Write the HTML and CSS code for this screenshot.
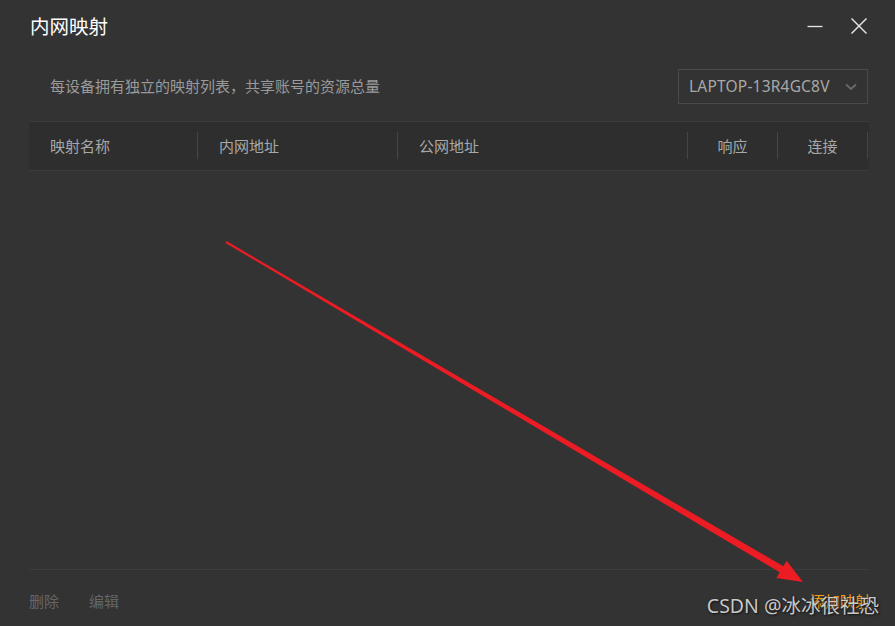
FILE: index.html
```html
<!DOCTYPE html>
<html lang="zh-CN">
<head>
<meta charset="utf-8">
<title>内网映射</title>
<link rel="stylesheet" href="styles.css">
</head>
<body>
<div class="dialog">
  <div class="titlebar">
    <div class="title">内网映射</div>
    <div class="win-controls">
      <span class="ctl ctl-min"><svg width="16" height="16" viewBox="0 0 16 16"><line x1="0.5" y1="8.5" x2="15.5" y2="8.5" stroke="#e6e6e6" stroke-width="1.3"/></svg></span>
      <span class="ctl ctl-close"><svg width="16" height="16" viewBox="0 0 16 16"><line x1="0.5" y1="0.5" x2="15.5" y2="15.5" stroke="#e6e6e6" stroke-width="1.4"/><line x1="15.5" y1="0.5" x2="0.5" y2="15.5" stroke="#e6e6e6" stroke-width="1.4"/></svg></span>
    </div>
  </div>
  <div class="content">
    <div class="toolbar">
      <div class="desc">每设备拥有独立的映射列表，共享账号的资源总量</div>
      <div class="select">
        <span class="select-text">LAPTOP-13R4GC8V</span>
        <svg class="chev" width="12" height="8" viewBox="0 0 12 8"><polyline points="1,1.5 6,6 11,1.5" fill="none" stroke="#6a6a6a" stroke-width="1.8"/></svg>
      </div>
    </div>
    <div class="thead">
      <div class="th">映射名称</div>
      <div class="th">内网地址</div>
      <div class="th">公网地址</div>
      <div class="th center">响应</div>
      <div class="th center">连接</div>
    </div>
    <div class="tbody"></div>
    <div class="footer">
      <div class="actions">
        <span class="act">删除</span>
        <span class="act">编辑</span>
      </div>
      <span class="add">添加映射</span>
    </div>
  </div>
</div>
<svg class="arrow" width="895" height="626" viewBox="0 0 895 626">
  <polygon fill="#ec1c24" points="226.5,241.1 783.3,566.3 786.6,560.7 803,582 776.4,577.9 779.7,572.3 225.5,242.9"/>
</svg>
<div class="watermark">CSDN @冰冰很社恐</div>
</body>
</html>
```

FILE: styles.css
```css
* { box-sizing: border-box; }
html, body {
  margin: 0;
  padding: 0;
}
body {
  width: 895px;
  height: 626px;
  background: #333333;
  font-family: "Noto Sans CJK SC", "Noto Sans", sans-serif;
  overflow: hidden;
  position: relative;
}
.dialog {
  height: 626px;
  display: flex;
  flex-direction: column;
}
.titlebar {
  height: 52px;
  display: flex;
  align-items: center;
  justify-content: space-between;
  padding: 0 28px 0 30px;
  flex: none;
}
.title {
  color: #ffffff;
  font-size: 19.5px;
  line-height: 24px;
  margin-top: -1px;
}
.win-controls {
  display: flex;
  align-items: center;
  gap: 28px;
}
.ctl {
  display: block;
  width: 16px;
  height: 16px;
}
.ctl svg { display: block; }
.ctl-min { margin-top: -1px; }
.content {
  flex: 1;
  display: flex;
  flex-direction: column;
  padding: 0 26px 0 29px;
}
.toolbar {
  margin-top: 17px;
  height: 34px;
  display: flex;
  align-items: center;
  justify-content: space-between;
  flex: none;
}
.desc {
  padding-left: 21px;
  color: #9a9a9a;
  font-size: 15px;
  line-height: 20px;
}
.select {
  width: 190px;
  height: 35px;
  margin-right: 1px;
  border: 1px solid #4a4a4a;
  display: flex;
  align-items: center;
  justify-content: space-between;
  padding: 0 10px 0 10px;
}
.select-text {
  color: #a8a8a8;
  font-family: "Noto Sans", "Open Sans", sans-serif;
  font-size: 15.5px;
  letter-spacing: 0.2px;
}
.chev { display: block; margin-top: 1px; }
.thead {
  margin-top: 18px;
  display: grid;
  grid-template-columns: 169px 200px 290px 90px 91px;
  background: #2e2e2e;
  border-top: 1px solid #3b3b3b;
  border-bottom: 1px solid #3b3b3b;
  padding: 10px 0 11px;
  flex: none;
}
.th {
  height: 27px;
  display: flex;
  align-items: center;
  padding-left: 21px;
  border-right: 1px solid #454545;
  color: #a8a8a8;
  font-size: 15px;
}
.th:last-child { margin-right: 1px; }
.th.center {
  justify-content: center;
  padding-left: 0;
}
.tbody {
  flex: 1;
}
.footer {
  flex: none;
  height: 57px;
  border-top: 1px solid #3d3d3d;
  display: flex;
  align-items: flex-start;
  justify-content: space-between;
  padding-top: 21px;
}
.actions {
  display: flex;
  gap: 30px;
}
.act {
  color: #666666;
  font-size: 15px;
  line-height: 20px;
}
.add {
  color: #f5a016;
  font-size: 15px;
  line-height: 20px;
  margin-right: -1px;
}
.arrow {
  position: absolute;
  left: 0;
  top: 0;
  pointer-events: none;
}
.watermark {
  position: absolute;
  right: 16px;
  top: 592px;
  color: #d6d6d6;
  font-size: 19.5px;
  line-height: 28px;
  font-family: "Noto Sans", "Noto Sans CJK SC", sans-serif;
  text-shadow: 1px 1px 2px #111, 0 0 1px #222;
  white-space: nowrap;
  opacity: 0.92;
}
```
